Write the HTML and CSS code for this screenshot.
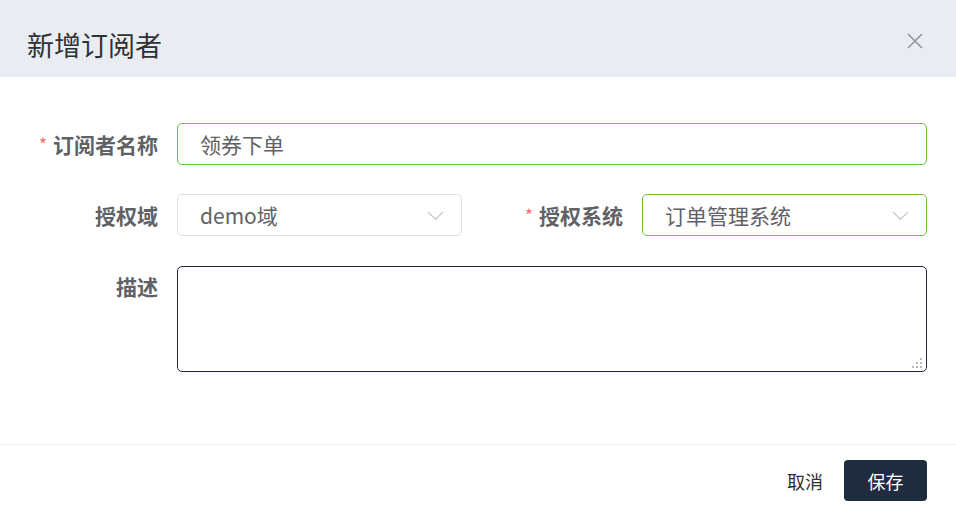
FILE: index.html
```html
<!DOCTYPE html>
<html lang="zh-CN">
<head>
    <meta charset="UTF-8">
    <meta name="viewport" content="width=device-width, initial-scale=1.0">
    <title>新增订阅者</title>
    <link rel="stylesheet" href="styles.css">
</head>
<body>

    <div class="dialog">
        <div class="dialog-header">
            <span class="dialog-title">新增订阅者</span>
            <button class="dialog-close" type="button" aria-label="关闭">
                <svg width="16" height="16" viewBox="0 0 16 16">
                    <path d="M1 1 L15 15 M15 1 L1 15" stroke="#909399" stroke-width="1.5" fill="none"/>
                </svg>
            </button>
        </div>

        <form class="form" id="form">
            <label class="label required" for="name">订阅者名称</label>
            <input class="input input-ok wide" id="name" type="text" value="领券下单">

            <label class="label">授权域</label>
            <div class="select">
                <span>demo域</span>
                <svg class="arrow" width="17" height="10" viewBox="0 0 17 10">
                    <path d="M1 1 L8.5 8.5 L16 1" stroke="#c0c4cc" stroke-width="1.1" fill="none"/>
                </svg>
            </div>

            <label class="label label-2 required">授权系统</label>
            <div class="select input-ok">
                <span>订单管理系统</span>
                <svg class="arrow" width="17" height="10" viewBox="0 0 17 10">
                    <path d="M1 1 L8.5 8.5 L16 1" stroke="#c0c4cc" stroke-width="1.1" fill="none"/>
                </svg>
            </div>

            <label class="label label-top" for="desc">描述</label>
            <div class="textarea-wrap wide">
                <textarea class="textarea" id="desc"></textarea>
                <svg class="grip" width="10" height="10" viewBox="0 0 10 10">
                    <rect x="8" y="0" width="2" height="2" fill="#bbbbbb"/>
                    <rect x="4" y="4" width="2" height="2" fill="#bbbbbb"/>
                    <rect x="8" y="4" width="2" height="2" fill="#bbbbbb"/>
                    <rect x="0" y="8" width="2" height="2" fill="#bbbbbb"/>
                    <rect x="4" y="8" width="2" height="2" fill="#bbbbbb"/>
                    <rect x="8" y="8" width="2" height="2" fill="#bbbbbb"/>
                </svg>
            </div>
        </form>

        <div class="dialog-footer">
            <button class="btn btn-text" type="button">取消</button>
            <button class="btn btn-primary" type="submit" form="form">保存</button>
        </div>
    </div>

</body>
</html>
```

FILE: styles.css
```css
body {
    margin: 0;
    font-family: "Noto Sans CJK SC", "Noto Sans", sans-serif;
    background-color: #ffffff;
    color: #303133;
}
.dialog {
    width: 956px;
    height: 526px;
}
.dialog-header {
    height: 77px;
    box-sizing: border-box;
    padding: 31px 33px 0 27px;
    background-color: #e9ecf1;
    display: flex;
    justify-content: space-between;
    align-items: flex-start;
}
.dialog-title {
    font-size: 27px;
    line-height: 27px;
    color: #303133;
}
.dialog-close {
    border: none;
    background: none;
    padding: 0;
    margin-top: 2px;
    width: 16px;
    height: 16px;
    cursor: pointer;
}
.dialog-close svg {
    display: block;
}
.form {
    display: grid;
    grid-template-columns: 177px 285px 180px 285px;
    row-gap: 29px;
    padding: 46px 29px 72px 0;
}
.label {
    box-sizing: border-box;
    height: 42px;
    padding-right: 19px;
    text-align: right;
    font-size: 21px;
    font-weight: bold;
    line-height: 42px;
    color: #606266;
    white-space: nowrap;
}
.label-top {
    height: 41px;
    margin-top: 1px;
    line-height: 41px;
}
.required::before {
    content: "*";
    color: #f56c6c;
    font-weight: normal;
    font-size: 17px;
    line-height: 1;
    margin-right: 6px;
    position: relative;
    top: -2px;
}
.wide {
    grid-column: 2 / 5;
}
.input,
.select {
    box-sizing: border-box;
    height: 42px;
    border: 1px solid #dcdfe6;
    border-radius: 5px;
    padding: 0 22px;
    font-family: inherit;
    font-size: 21px;
    color: #606266;
    background-color: #ffffff;
    outline: none;
}
.select {
    display: flex;
    align-items: center;
    justify-content: space-between;
    padding-right: 17px;
}
.select span {
    line-height: 40px;
}
.arrow {
    margin-top: 1px;
}
.input-ok {
    border-color: #67c23a;
}
.textarea-wrap {
    position: relative;
    height: 106px;
    margin-top: 1px;
}
.textarea {
    display: block;
    box-sizing: border-box;
    width: 100%;
    height: 106px;
    border: 1px solid #1f2a3c;
    border-radius: 5px;
    resize: none;
    outline: none;
    font-family: inherit;
    font-size: 21px;
}
.grip {
    position: absolute;
    right: 5px;
    bottom: 4px;
}
.dialog-footer {
    border-top: 1px solid #ebedf2;
    padding: 15px 29px 0 0;
    display: flex;
    justify-content: flex-end;
}
.btn {
    height: 41px;
    border: none;
    border-radius: 4px;
    font-family: inherit;
    font-size: 18px;
    cursor: pointer;
}
.btn-text {
    background: none;
    color: #303133;
    padding: 0 21px;
}
.btn-primary {
    width: 83px;
    background-color: #1f2b3e;
    color: #ffffff;
}
.btn-primary:hover {
    background-color: #2b3a52;
}
```
